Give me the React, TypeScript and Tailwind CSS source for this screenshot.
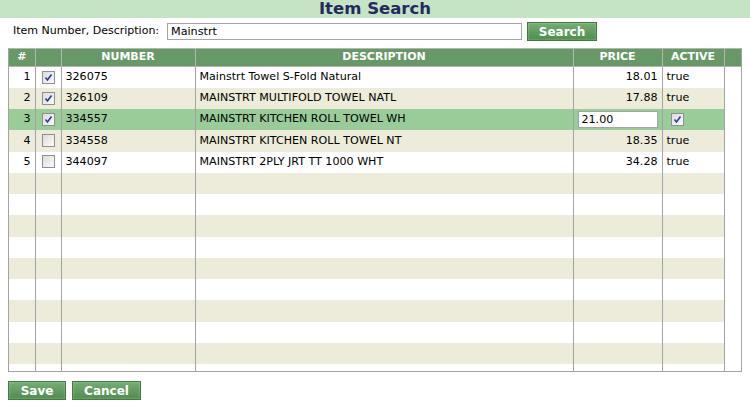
import React from "react";

type Row = {
  number: string;
  description: string;
  price: string;
  active: string;
  checked: boolean;
};

const rows: Row[] = [
  { number: "326075", description: "Mainstrt Towel S-Fold Natural", price: "18.01", active: "true", checked: true },
  { number: "326109", description: "MAINSTRT MULTIFOLD TOWEL NATL", price: "17.88", active: "true", checked: true },
  { number: "334557", description: "MAINSTRT KITCHEN ROLL TOWEL WH", price: "21.00", active: "true", checked: true },
  { number: "334558", description: "MAINSTRT KITCHEN ROLL TOWEL NT", price: "18.35", active: "true", checked: false },
  { number: "344097", description: "MAINSTRT 2PLY JRT TT 1000 WHT", price: "34.28", active: "true", checked: false },
];

const EDIT_ROW = 2;
const TOTAL_ROWS = 14;

function Check({ checked }: { checked: boolean }) {
  return (
    <span className="inline-flex w-[13px] h-[13px] items-center justify-center border border-[#8f8f8f] bg-gradient-to-br from-[#dcdcdc] to-[#fafafa] align-middle">
      {checked && (
        <svg width="9" height="9" viewBox="0 0 9 9">
          <path d="M1.5 4.5 L3.5 7 L7.5 1.5" fill="none" stroke="#2a3d8f" strokeWidth="1.6" />
        </svg>
      )}
    </span>
  );
}

function GreenButton({ label, width }: { label: string; width: string }) {
  return (
    <button
      className={`${width} h-[19px] border border-[#3f7a3f] bg-gradient-to-b from-[#74ae74] to-[#4f8c4f] text-white font-bold text-[12px] leading-none shadow-[inset_0_0_2px_rgba(255,255,255,0.5)]`}
    >
      {label}
    </button>
  );
}

export default function App() {
  const body = Array.from({ length: TOTAL_ROWS }, (_, i) => rows[i] ?? null);

  return (
    <div className="w-[750px] h-[408px] bg-white text-[12px] text-black overflow-hidden" style={{ fontFamily: "Tahoma, 'DejaVu Sans', Verdana, sans-serif" }}>
      <div className="h-[18px] bg-[#c5e3c5] flex items-center justify-center">
        <h1 className="text-[16.5px] font-bold text-[#232a5c] leading-none pt-[1px]">Item Search</h1>
      </div>

      <div className="flex items-center mt-[4px] h-[19px]">
        <label className="ml-[13px] w-[154px] text-[11px]">Item Number, Description:</label>
        <input
          defaultValue="Mainstrt"
          className="w-[355px] h-[17px] border border-[#a5a5a5] px-[3px] text-[11.2px] outline-none"
        />
        <div className="ml-[5px]">
          <GreenButton label="Search" width="w-[70px]" />
        </div>
      </div>

      <div className="mx-[8px] mt-[7px] w-[734px] h-[324px] border border-[#a3a3a3] border-t-0 overflow-hidden">
        <table className="table-fixed border-collapse w-[732px] text-[11.1px]">
          <colgroup>
            <col className="w-[26px]" />
            <col className="w-[26px]" />
            <col className="w-[134px]" />
            <col className="w-[378px]" />
            <col className="w-[89px]" />
            <col className="w-[62px]" />
            <col className="w-[17px]" />
          </colgroup>
          <thead>
            <tr className="h-[18px] bg-[#669966] text-white font-bold text-[11px]">
              <th className="border border-[#b5b5b5] border-l-0">#</th>
              <th className="border border-[#b5b5b5]"></th>
              <th className="border border-[#b5b5b5]">NUMBER</th>
              <th className="border border-[#b5b5b5]">DESCRIPTION</th>
              <th className="border border-[#b5b5b5]">PRICE</th>
              <th className="border border-[#b5b5b5]">ACTIVE</th>
              <th className="border border-[#b5b5b5] border-r-0"></th>
            </tr>
          </thead>
          <tbody>
            {body.map((r, i) => {
              const bg = i === EDIT_ROW ? "bg-[#99cc99]" : i % 2 === 1 ? "bg-[#edecda]" : "bg-white";
              const cell = `border-r border-[#a3a3a3] ${bg}`;
              return (
                <tr key={i} className="h-[21.25px]">
                  <td className={`${cell} text-right pr-[4px]`}>{r ? i + 1 : ""}</td>
                  <td className={`${cell} text-center`}>{r && <Check checked={r.checked} />}</td>
                  <td className={`${cell} pl-[4px]`}>{r?.number}</td>
                  <td className={`${cell} pl-[4px]`}>{r?.description}</td>
                  <td className={`${cell} text-right pr-[4px]`}>
                    {r && i === EDIT_ROW ? (
                      <input
                        defaultValue={r.price}
                        className="w-[80px] h-[17px] border border-[#a5a5a5] bg-white px-[3px] text-left outline-none align-middle"
                      />
                    ) : (
                      r?.price
                    )}
                  </td>
                  <td className={`${cell} pl-[4px]`}>
                    {r && i === EDIT_ROW ? <span className="ml-[4px]"><Check checked /></span> : r?.active}
                  </td>
                  <td className="bg-white"></td>
                </tr>
              );
            })}
            <tr className="h-[8px]">
              <td className="border-r border-[#a3a3a3]"></td>
              <td className="border-r border-[#a3a3a3]"></td>
              <td className="border-r border-[#a3a3a3]"></td>
              <td className="border-r border-[#a3a3a3]"></td>
              <td className="border-r border-[#a3a3a3]"></td>
              <td className="border-r border-[#a3a3a3]"></td>
              <td></td>
            </tr>
          </tbody>
        </table>
      </div>

      <div className="flex gap-[6px] ml-[8px] mt-[9px]">
        <GreenButton label="Save" width="w-[58px]" />
        <GreenButton label="Cancel" width="w-[69px]" />
      </div>
    </div>
  );
}
